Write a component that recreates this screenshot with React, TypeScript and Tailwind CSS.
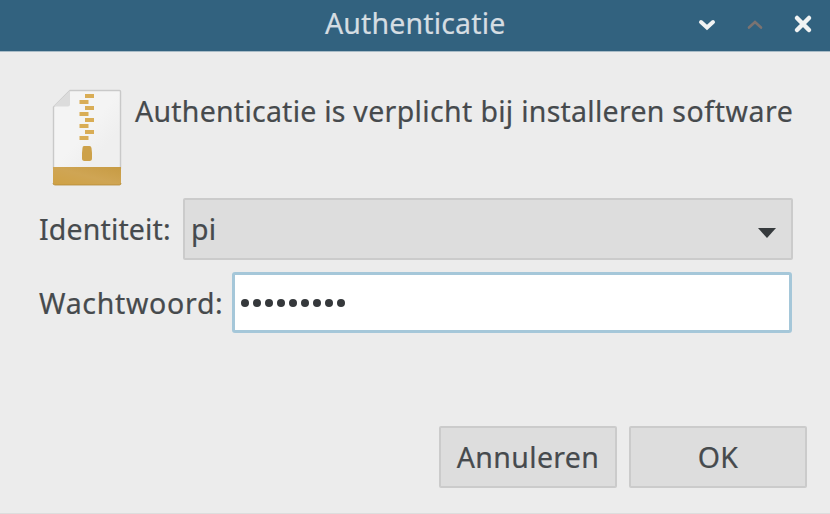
import React from "react";

function TitleBar() {
  return (
    <header className="grid h-[52px] shrink-0 grid-cols-[325px_1fr_134px] border-b border-[#a9bcc7] bg-[#32627f]">
      <span />
      <h1 className="h-[47px] whitespace-nowrap text-[28.5px] leading-[46px] tracking-[0.15px] text-[#d5dde2]">Authenticatie</h1>
      <div className="flex h-[48px] items-center">
        <svg viewBox="0 0 134 48" className="h-[48px] w-[134px]" fill="none" strokeLinecap="round">
          <path d="M5 22l6 5.500 6-5.500" stroke="#f1f3f3" strokeWidth="4" />
          <path d="M53 27.500l6-5.500 6 5.500" stroke="#7b7371" strokeWidth="2.6" />
          <path d="M101 18l12 12M113 18l-12 12" stroke="#f1f3f3" strokeWidth="4.5" />
        </svg>
      </div>
    </header>
  );
}

function ArchiveIcon() {
  const teeth = [0, 1, 2, 3, 4, 5, 6, 7];
  return (
    <svg viewBox="0 0 70 98" className="h-[98px] w-[70px] shrink-0">
      <defs>
        <linearGradient id="paper" x1="0" y1="0" x2="1" y2="1">
          <stop offset="0.5" stopColor="#f4f4f4" />
          <stop offset="0.75" stopColor="#efefef" />
        </linearGradient>
        <linearGradient id="gold" x1="0" y1="1" x2="1" y2="0">
          <stop offset="0" stopColor="#cfa144" />
          <stop offset="0.5" stopColor="#cfa554" />
          <stop offset="1" stopColor="#c79b43" />
        </linearGradient>
      </defs>
      <path d="M18 1.500H67.500Q68.500 1.500 68.500 2.500V79H1.500V18Z" fill="url(#paper)" stroke="#c9c9c9" strokeWidth="1.4" />
      <path d="M18 1.500V15.500Q18 17.500 16 17.500H1.500Z" fill="#dcdcdc" />
      <path d="M1 78H69V94.500Q69 96 67.500 96H3Q1 96 1 94Z" fill="url(#gold)" />
      <path d="M1 94Q1 96 3 96H67.500Q69 96 69 94" fill="none" stroke="#b58b39" strokeWidth="0.8" />
      {teeth.map((i) => (
        <rect key={i} x={i % 2 ? 27.5 : 33} y={5 + i * 6} width="9" height="4" fill="#d9ad56" />
      ))}
      <path d="M32 57H37.500Q39.200 57 39.500 59L40 64V69Q40.200 72 37.500 72H32.500Q29.800 72 30 69V64L30.500 59Q30.500 57 32 57Z" fill="#cda149" />
    </svg>
  );
}

function DialogButton({ children }: { children: React.ReactNode }) {
  return (
    <button className="flex h-[62px] w-[178px] items-center justify-center rounded-[2px] border-2 border-[#cbcbcb] bg-[#dddddd] text-[28.5px] leading-[38px] tracking-[0.35px]">
      {children}
    </button>
  );
}

export default function App() {
  return (
    <div className="flex h-[514px] w-[830px] flex-col overflow-hidden bg-[#ececec] font-['Noto_Sans',sans-serif] text-[28.5px] text-[#464a4d] [-webkit-text-stroke:0.2px]">
      <TitleBar />
      <main className="flex flex-1 flex-col border-b border-[#dddddd]">
        <div className="mt-[37px] flex h-[98px] pl-[52px]">
          <ArchiveIcon />
          <p className="ml-[13px] mt-[3px] whitespace-nowrap leading-[38px]">
            <span className="tracking-[0.24px]">Authenticatie is </span>
            <span className="tracking-[0.35px]">verplicht </span>
            <span className="tracking-[0.27px]">bij installeren </span>
            <span className="tracking-[0.55px]">software</span>
          </p>
        </div>
        <div className="mt-[10px] flex h-[63px] items-center pl-[39px]">
          <label className="w-[144px] shrink-0 whitespace-nowrap pt-[2px] tracking-[0.15px]">Identiteit:</label>
          <button className="flex h-[62px] w-[610px] items-center justify-between rounded-[2px] border-2 border-[#cbcbcb] bg-[#dddddd] pl-[6px] pr-[15px] tracking-[0.2px]">
            <span className="pt-[2px]">pi</span>
            <svg viewBox="0 0 18 10" className="mt-[9px] h-[10px] w-[18px]">
              <path d="M0 0H18L9 10Z" fill="#363a3d" />
            </svg>
          </button>
        </div>
        <div className="mt-[12px] flex h-[61px] items-center pl-[39px]">
          <label className="w-[193px] shrink-0 whitespace-nowrap pt-[2px] tracking-[0.7px]">Wachtwoord:</label>
          <div className="flex h-[61px] w-[560px] items-center gap-[4px] rounded-[3px] border-[3px] border-[#a5c7d9] bg-white pl-[6px]">
            {Array.from({ length: 9 }, (_, i) => (
              <span key={i} className="h-[8px] w-[8px] rounded-full bg-[#35383b]" />
            ))}
          </div>
        </div>
        <footer className="mt-[93px] flex gap-[12px] pl-[439px]">
          <DialogButton>Annuleren</DialogButton>
          <DialogButton>OK</DialogButton>
        </footer>
      </main>
    </div>
  );
}
